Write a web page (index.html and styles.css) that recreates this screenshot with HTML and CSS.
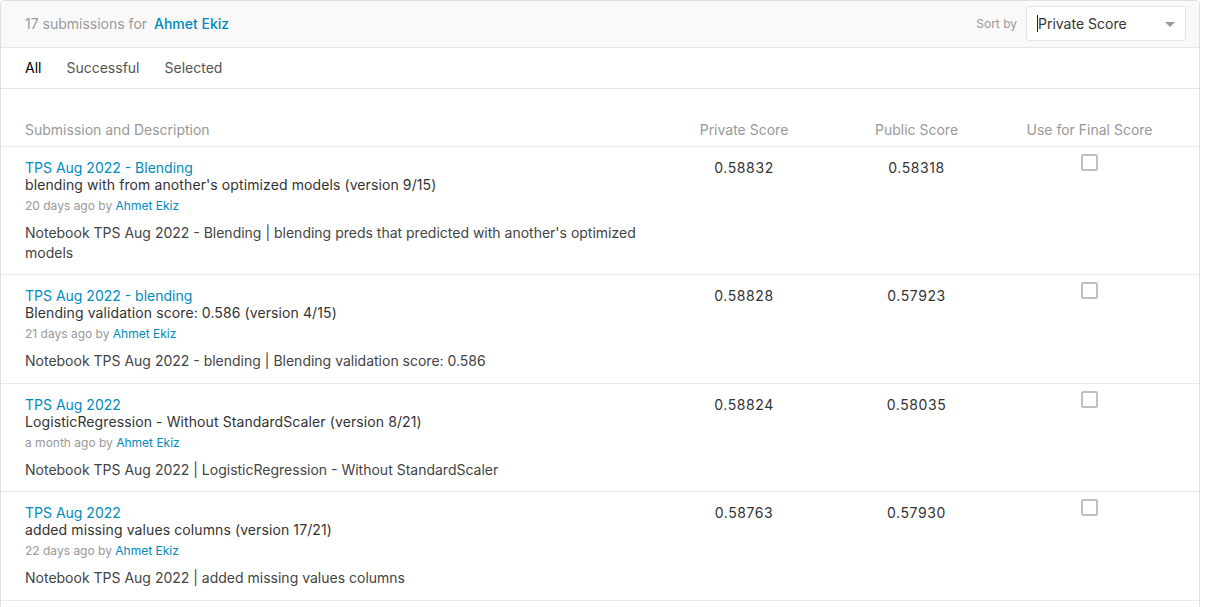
FILE: index.html
```html
<!DOCTYPE html>
<html>
<head>
<meta charset="utf-8">
<link rel="stylesheet" href="styles.css">
</head>
<body>
<div class="panel">
  <div class="panel-head">
    <div class="count">17 submissions for <a class="user" href="#">Ahmet Ekiz</a></div>
    <div class="sort">
      <span class="sort-label">Sort by</span>
      <div class="select">
        <span class="caret"></span><span class="select-text">Private Score</span>
        <span class="arrow"></span>
      </div>
    </div>
  </div>
  <div class="tabs">
    <span class="tab active">All</span>
    <span class="tab">Successful</span>
    <span class="tab">Selected</span>
  </div>
  <div class="table">
    <div class="row head">
      <div class="cell">Submission and Description</div>
      <div class="cell num">Private Score</div>
      <div class="cell num">Public Score</div>
      <div class="cell num">Use for Final Score</div>
    </div>

    <div class="row">
      <div class="cell sub">
        <a class="title" href="#">TPS Aug 2022 - Blending</a>
        <div class="version">blending with from another's optimized models (version 9/15)</div>
        <div class="meta">20 days ago by <a href="#">Ahmet Ekiz</a></div>
        <div class="desc">Notebook TPS Aug 2022 - Blending | blending preds that predicted with another's optimized models</div>
      </div>
      <div class="cell num score">0.58832</div>
      <div class="cell num score">0.58318</div>
      <div class="cell num"><span class="check"></span></div>
    </div>

    <div class="row">
      <div class="cell sub">
        <a class="title" href="#">TPS Aug 2022 - blending</a>
        <div class="version">Blending validation score: 0.586 (version 4/15)</div>
        <div class="meta">21 days ago by <a href="#">Ahmet Ekiz</a></div>
        <div class="desc">Notebook TPS Aug 2022 - blending | Blending validation score: 0.586</div>
      </div>
      <div class="cell num score">0.58828</div>
      <div class="cell num score">0.57923</div>
      <div class="cell num"><span class="check"></span></div>
    </div>

    <div class="row">
      <div class="cell sub">
        <a class="title" href="#">TPS Aug 2022</a>
        <div class="version">LogisticRegression - Without StandardScaler (version 8/21)</div>
        <div class="meta">a month ago by <a href="#">Ahmet Ekiz</a></div>
        <div class="desc">Notebook TPS Aug 2022 | LogisticRegression - Without StandardScaler</div>
      </div>
      <div class="cell num score">0.58824</div>
      <div class="cell num score">0.58035</div>
      <div class="cell num"><span class="check"></span></div>
    </div>

    <div class="row">
      <div class="cell sub">
        <a class="title" href="#">TPS Aug 2022</a>
        <div class="version">added missing values columns (version 17/21)</div>
        <div class="meta">22 days ago by <a href="#">Ahmet Ekiz</a></div>
        <div class="desc">Notebook TPS Aug 2022 | added missing values columns</div>
      </div>
      <div class="cell num score">0.58763</div>
      <div class="cell num score">0.57930</div>
      <div class="cell num"><span class="check"></span></div>
    </div>
  </div>
</div>
</body>
</html>
```

FILE: styles.css
```css
html, body {
  margin: 0;
  padding: 0;
  background: #fff;
}
body {
  font-family: Inter, "Noto Sans", sans-serif;
  font-size: 14px;
  color: #333;
}
a {
  color: #008abc;
  text-decoration: none;
}
.panel {
  width: 1198px;
  min-height: 640px;
  border: 1px solid #dedfe0;
  border-radius: 4px 4px 0 0;
}
.panel-head {
  height: 46px;
  background: #f9f9f9;
  border-bottom: 1px solid #e6e6e6;
  border-radius: 4px 4px 0 0;
  display: flex;
  align-items: center;
  justify-content: space-between;
  padding: 0 13px 0 24px;
}
.count {
  color: #999;
  font-size: 14px;
  margin-top: -1px;
}
.count .user {
  font-weight: 500;
  margin-left: 3px;
}
.sort {
  display: flex;
  align-items: center;
  gap: 9px;
  margin-top: -2px;
}
.sort-label {
  font-size: 12px;
  color: #999;
}
.select {
  width: 148px;
  height: 33px;
  background: #fff;
  border: 1px solid #e4e4e4;
  border-radius: 3px;
  display: flex;
  align-items: center;
  padding-left: 10px;
  box-sizing: content-box;
  position: relative;
}
.caret {
  width: 1px;
  height: 17px;
  background: #222;
}
.select-text {
  font-size: 14px;
  color: #333;
}
.arrow {
  position: absolute;
  right: 10px;
  top: 15px;
  width: 0;
  height: 0;
  border-left: 5px solid transparent;
  border-right: 5px solid transparent;
  border-top: 5px solid #9a9a9a;
}
.tabs {
  border-bottom: 1px solid #e6e6e6;
  display: flex;
  align-items: center;
  gap: 25px;
  padding: 0 24px 2px;
  box-sizing: border-box;
  height: 41px;
}
.tab {
  color: #555;
  font-size: 14px;
}
.tab.active {
  color: #000;
}
.table {
  padding-top: 32px;
}
.row {
  display: grid;
  grid-template-columns: 1fr 172px 173px 173px;
  padding: 12px 23px 12px 24px;
  border-bottom: 1px solid #ebebeb;
}
.row.head {
  padding-top: 0;
  padding-bottom: 7px;
}
.row.head .cell {
  color: #999;
  line-height: 18px;
}
.cell.num {
  text-align: center;
}
.score {
  line-height: 18px;
  color: #333;
  letter-spacing: 0.6px;
}
.title {
  display: block;
  line-height: 17px;
}
.version {
  line-height: 18px;
  color: #333;
  letter-spacing: 0.1px;
}
.meta {
  font-size: 12px;
  line-height: 16px;
  color: #999;
  margin-top: 4px;
}
.desc {
  margin-top: 9px;
  line-height: 19.5px;
  color: #444;
  padding-right: 20px;
}
.check {
  display: inline-block;
  width: 13px;
  height: 13px;
  border: 2px solid #bdc1c6;
  border-radius: 2px;
  margin-top: -5px;
  vertical-align: top;
}
```
